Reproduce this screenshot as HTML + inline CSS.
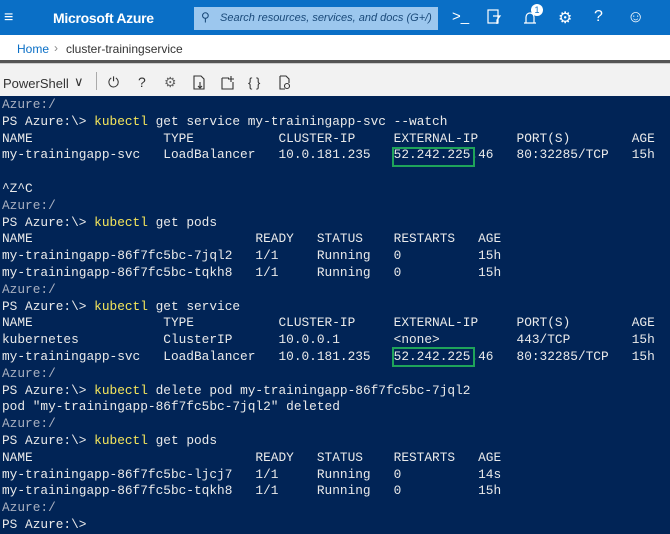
<!DOCTYPE html>
<html><head><meta charset="utf-8"><style>
*{margin:0;padding:0;box-sizing:border-box}
body{width:670px;height:532px;overflow:hidden;background:#012456;font-family:"Liberation Sans",sans-serif;position:relative}
.top{position:absolute;left:0;top:0;width:670px;height:35px;background:#0a6fc6;color:#fff}
.crumb{position:absolute;left:0;top:35px;width:670px;height:26px;background:#fff;font-size:12px;color:#333}
.sep{position:absolute;left:0;top:60px;width:670px;height:3px;background:#555}
.tb{position:absolute;left:0;top:63px;width:670px;height:33px;background:#f2f2f2;border-top:1px solid #ccc;color:#333}
pre{position:absolute;left:2px;top:97px;font-family:"Liberation Mono",monospace;font-size:12.8px;line-height:16.8px;color:#eaeaea;white-space:pre}
.g{color:#a9b0c0}.y{color:#f5e65b}
.box{position:absolute;border:2px solid #1fa35a;width:83px;height:20px;left:392px}
</style></head><body>
<div class="top">
<div style="position:absolute;left:4px;top:9px;font-size:16px">≡</div>
<div style="position:absolute;left:53px;top:10px;font-size:14px;font-weight:bold;letter-spacing:-0.3px">Microsoft Azure</div>
<div style="position:absolute;left:194px;top:7px;width:244px;height:23px;background:#9cc7ee;color:#1a4a7a;font-size:11px;font-style:italic;padding:5px 0 0 26px;white-space:nowrap;overflow:hidden">Search resources, services, and docs (G+/)</div>
<div style="position:absolute;left:201px;top:10px;font-size:12px;color:#1a4a7a">⚲</div>
<div style="position:absolute;left:452px;top:8px;font-size:15px">&gt;_</div>
<svg style="position:absolute;left:486px;top:9px" width="16" height="16" fill="none" stroke="#fff" stroke-width="1.2"><rect x="2" y="1" width="10" height="13"/><path d="M7 7h7l-3 4v4"/></svg>
<svg style="position:absolute;left:522px;top:8px" width="18" height="18" fill="none" stroke="#fff" stroke-width="1.2"><path d="M4 15V9a4 4 0 0 1 8 0v6zM2 15h12"/></svg>
<div style="position:absolute;left:531px;top:4px;width:12px;height:12px;border-radius:6px;background:#fff;color:#0a6fc6;font-size:9px;text-align:center;line-height:12px">1</div>
<div style="position:absolute;left:558px;top:8px;font-size:16px">⚙</div>
<div style="position:absolute;left:594px;top:8px;font-size:16px">?</div>
<div style="position:absolute;left:627px;top:7px;font-size:17px">☺</div>
</div>
<div class="crumb"><span style="position:absolute;left:17px;top:7px;color:#0a6fc6">Home</span><span style="position:absolute;left:54px;top:6px;color:#888">›</span><span style="position:absolute;left:66px;top:7px">cluster-trainingservice</span></div>
<div class="sep"></div>
<div class="tb">
<span style="position:absolute;left:3px;top:12px;font-size:13px">PowerShell</span>
<span style="position:absolute;left:74px;top:10px;font-size:13px">∨</span>
<div style="position:absolute;left:96px;top:8px;width:1px;height:18px;background:#aaa"></div>
<span style="position:absolute;left:108px;top:10px;font-size:14px">⏻</span>
<span style="position:absolute;left:138px;top:10px;font-size:14px">?</span>
<span style="position:absolute;left:164px;top:10px;font-size:14px;color:#666">⚙</span>
<svg style="position:absolute;left:192px;top:11px" width="14" height="16" fill="none" stroke="#333" stroke-width="1.1"><path d="M2 1h7l3 3v10H2zM8 7v6M6 11l2 2 2-2"/></svg>
<svg style="position:absolute;left:220px;top:11px" width="16" height="16" fill="none" stroke="#333" stroke-width="1.1"><path d="M2 3h7M2 3v11h11V7M11 1v6M8 4h6"/></svg>
<span style="position:absolute;left:248px;top:11px;font-size:13px">{ }</span>
<svg style="position:absolute;left:278px;top:11px" width="14" height="16" fill="none" stroke="#333" stroke-width="1.1"><path d="M2 1h6l3 3v4M2 1v13h5"/><circle cx="9" cy="11" r="2.5"/></svg>
</div>
<pre><span class="g">Azure:/</span>
PS Azure:\&gt; <span class="y">kubectl</span> get service my-trainingapp-svc --watch
NAME                 TYPE           CLUSTER-IP     EXTERNAL-IP     PORT(S)        AGE
my-trainingapp-svc   LoadBalancer   10.0.181.235   52.242.225.46   80:32285/TCP   15h

^Z^C
<span class="g">Azure:/</span>
PS Azure:\&gt; <span class="y">kubectl</span> get pods
NAME                             READY   STATUS    RESTARTS   AGE
my-trainingapp-86f7fc5bc-7jql2   1/1     Running   0          15h
my-trainingapp-86f7fc5bc-tqkh8   1/1     Running   0          15h
<span class="g">Azure:/</span>
PS Azure:\&gt; <span class="y">kubectl</span> get service
NAME                 TYPE           CLUSTER-IP     EXTERNAL-IP     PORT(S)        AGE
kubernetes           ClusterIP      10.0.0.1       &lt;none&gt;          443/TCP        15h
my-trainingapp-svc   LoadBalancer   10.0.181.235   52.242.225.46   80:32285/TCP   15h
<span class="g">Azure:/</span>
PS Azure:\&gt; <span class="y">kubectl</span> delete pod my-trainingapp-86f7fc5bc-7jql2
pod "my-trainingapp-86f7fc5bc-7jql2" deleted
<span class="g">Azure:/</span>
PS Azure:\&gt; <span class="y">kubectl</span> get pods
NAME                             READY   STATUS    RESTARTS   AGE
my-trainingapp-86f7fc5bc-ljcj7   1/1     Running   0          14s
my-trainingapp-86f7fc5bc-tqkh8   1/1     Running   0          15h
<span class="g">Azure:/</span>
PS Azure:\&gt;</pre>
<div class="box" style="top:147px"></div>
<div class="box" style="top:347px"></div>
</body></html>
